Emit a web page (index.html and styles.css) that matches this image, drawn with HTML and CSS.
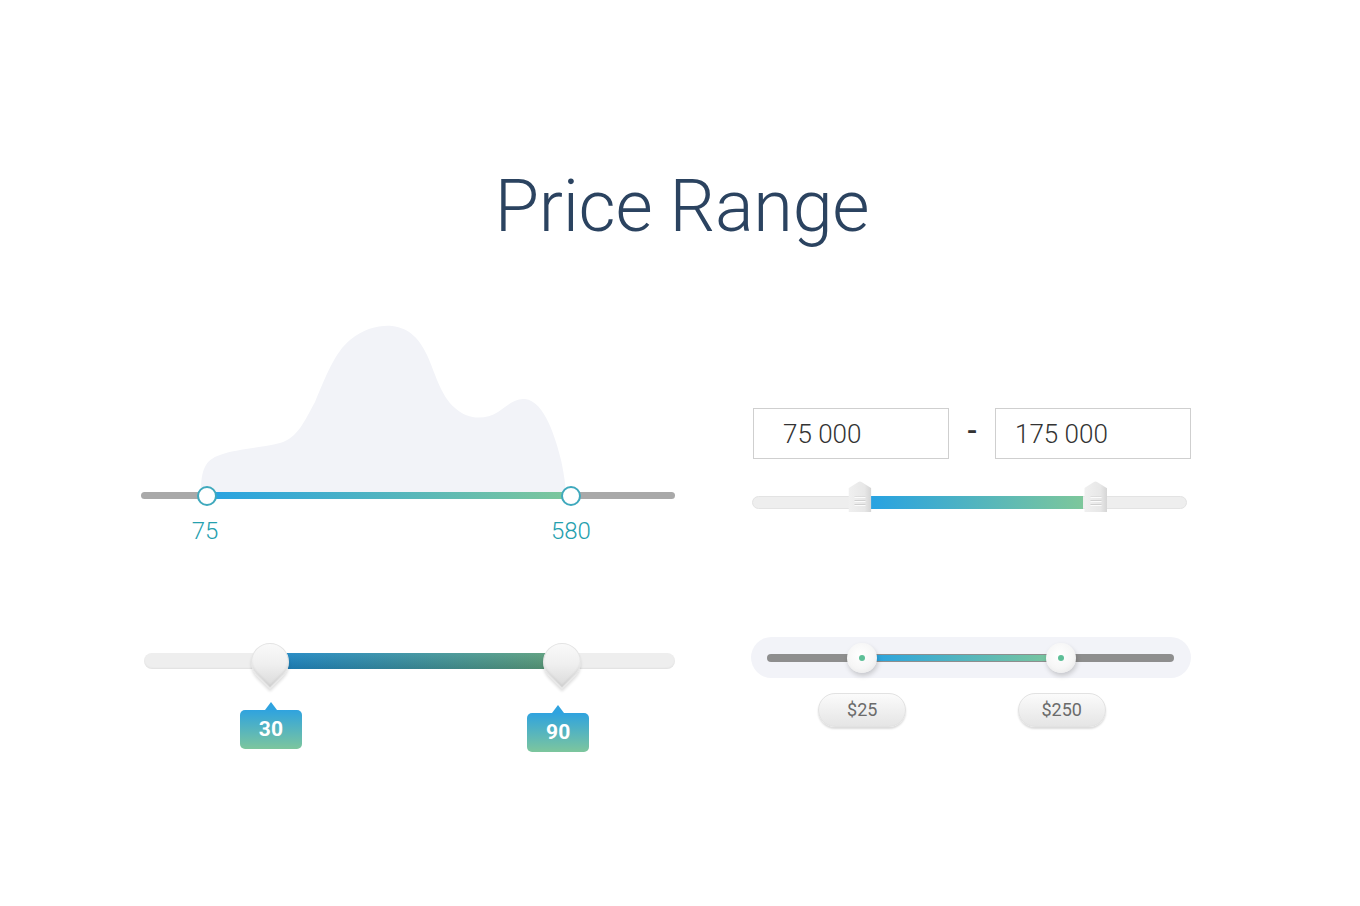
FILE: index.html
```html
<!DOCTYPE html>
<html lang="en">
<head>
    <meta charset="UTF-8">
    <meta name="viewport" content="width=device-width, initial-scale=1.0">
    <title>Price Range</title>
    <link rel="stylesheet" href="styles.css">
</head>
<body>
    <main class="page">
        <h1 class="title">Price Range</h1>

        <div class="grid">
            <!-- slider with distribution hill -->
            <section class="widget">
                <svg class="hill" viewBox="141 320 534 172" width="534" height="172">
                    <path d="M201,492 C201,470 205,460 220,455 C235,449 260,448 280,443 C298,438 305,420 315,402 C325,378 335,352 350,340 C365,328 380,325 392,326 C410,328 420,340 427,355 C435,372 440,395 455,408 C468,420 485,420 498,412 C508,405 515,398 525,399 C545,401 556,440 561,460 C565,478 566,492 566,492 Z" fill="#f2f3f8"/>
                </svg>
                <div class="track-thin">
                    <div class="fill-thin" style="left: 12.36%; width: 68.16%;"></div>
                    <span class="ring-handle" style="left: 12.36%;"></span>
                    <span class="ring-handle" style="left: 80.52%;"></span>
                </div>
                <div class="thin-labels">
                    <span class="thin-label" style="left: 12%;">75</span>
                    <span class="thin-label" style="left: 80.5%;">580</span>
                </div>
            </section>

            <!-- slider with input boxes -->
            <section class="widget widget-inputs">
                <div class="input-row">
                    <input class="price-box" type="text" value="75 000">
                    <span class="dash">-</span>
                    <input class="price-box price-box-max" type="text" value="175 000">
                </div>
                <div class="track-bar">
                    <div class="fill-bar" style="left: 27.1%; width: 49.2%;"></div>
                    <span class="grip-handle" style="left: 24.7%;"><i></i></span>
                    <span class="grip-handle" style="left: 79.1%;"><i></i></span>
                </div>
            </section>

            <!-- slider with pin handles -->
            <section class="widget widget-pins">
                <div class="track-pins">
                    <div class="fill-pins" style="left: 26.5%; width: 49.7%;"></div>
                    <span class="pin" style="left: 23.7%;"></span>
                    <span class="pin" style="left: 78.7%;"></span>
                </div>
                <div class="tips">
                    <span class="tip" style="left: 23.9%;">30</span>
                    <span class="tip tip-low" style="left: 78%;">90</span>
                </div>
            </section>

            <!-- slider in a pill -->
            <section class="widget widget-pill">
                <div class="pill">
                    <div class="track-dark">
                        <div class="fill-dark" style="left: 23.4%; width: 48.8%;"></div>
                        <span class="knob" style="left: 23.4%;"></span>
                        <span class="knob" style="left: 72.2%;"></span>
                    </div>
                </div>
                <div class="pill-labels">
                    <span class="pill-label" style="left: 23.4%;">$25</span>
                    <span class="pill-label" style="left: 72.4%;">$250</span>
                </div>
            </section>
        </div>
    </main>
</body>
</html>
```

FILE: styles.css
```css
* {
    box-sizing: border-box;
    margin: 0;
    padding: 0;
}

body {
    font-family: Roboto, "Liberation Sans", Arial, sans-serif;
    background-color: #ffffff;
    color: #333333;
    min-height: 100vh;
}

.page {
    padding-top: 171px;
}

.title {
    text-align: center;
    font-size: 72px;
    font-weight: 300;
    line-height: 1;
    letter-spacing: -0.3px;
    color: #2b4360;
    padding-left: 4px;
}

.grid {
    display: grid;
    grid-template-columns: 534px 440px;
    grid-template-rows: 240px 150px;
    column-gap: 76px;
    row-gap: 70px;
    margin: 77px 0 0 141px;
}

.widget {
    position: relative;
}

/* top left */
.hill {
    display: block;
}

.track-thin {
    position: relative;
    height: 7px;
    background-color: #a9a9a9;
    border-radius: 4px;
}

.fill-thin {
    position: absolute;
    top: 0;
    bottom: 0;
    background: linear-gradient(to right, #27a2e2, #7dc79b);
}

.ring-handle {
    position: absolute;
    top: 50%;
    width: 20px;
    height: 20px;
    border-radius: 50%;
    background-color: #ffffff;
    border: 2px solid #3fa9bd;
    transform: translate(-50%, -50%);
}

.thin-labels {
    position: relative;
    height: 24px;
    margin-top: 20px;
}

.thin-label {
    position: absolute;
    top: 0;
    transform: translateX(-50%);
    font-size: 24px;
    font-weight: 300;
    line-height: 1;
    color: #25a0ae;
}

/* top right */
.widget-inputs {
    padding-top: 88px;
}

.input-row {
    display: flex;
    align-items: center;
    padding-left: 2px;
}

.price-box {
    width: 196px;
    height: 51px;
    border: 1px solid #cfcfcf;
    padding-left: 29px;
    font-family: inherit;
    font-size: 26px;
    font-weight: 300;
    color: #333333;
    background: #ffffff;
    outline: none;
}

.price-box-max {
    padding-left: 19px;
}

.dash {
    width: 46px;
    text-align: center;
    font-size: 30px;
    font-weight: 500;
    line-height: 1;
    color: #333333;
    margin-top: -5px;
}

.track-bar {
    position: relative;
    width: 435px;
    height: 13px;
    margin: 37px 0 0 1px;
    background-color: #eeeeee;
    border: 1px solid #e3e3e3;
    border-radius: 7px;
}

.fill-bar {
    position: absolute;
    top: -1px;
    bottom: -1px;
    background: linear-gradient(to right, #27a2e2, #7dc79b);
}

.grip-handle {
    position: absolute;
    top: 50%;
    width: 23px;
    height: 31px;
    transform: translate(-50%, calc(-50% - 6px));
    clip-path: polygon(50% 0, 100% 23%, 100% 100%, 0 100%, 0 23%);
    background: linear-gradient(to right, #f0f0f0 0%, #e7e7e7 70%, #d4d4d4 100%);
    display: flex;
    align-items: center;
    justify-content: center;
}

.grip-handle i {
    display: block;
    width: 11px;
    height: 11px;
    margin-top: 11px;
    background: repeating-linear-gradient(to bottom, #d0d0d0 0 1px, #fbfbfb 1px 2px, transparent 2px 4px);
}

/* bottom left */
.track-pins {
    position: relative;
    height: 16px;
    margin: 23px 0 0 3px;
    width: 531px;
    background-color: #eeeeee;
    border-radius: 8px;
    box-shadow: inset 0 -1px 2px rgba(0, 0, 0, 0.06);
}

.fill-pins {
    position: absolute;
    top: 0;
    bottom: 0;
    background:
        linear-gradient(to bottom, rgba(255, 255, 255, 0.05), rgba(0, 0, 0, 0.12)),
        linear-gradient(to right, #2088c4, #5c9f7d);
}

.pin {
    position: absolute;
    top: -10px;
    width: 38px;
    height: 38px;
    margin-left: -19px;
    border-radius: 50% 50% 0 50%;
    transform: rotate(45deg);
    border: 1px solid #e4e4e4;
    background: linear-gradient(135deg, #fdfdfd 0%, #efefef 55%, #d9d9d9 100%);
    box-shadow: 2px 2px 3px rgba(0, 0, 0, 0.13), inset -2px -2px 2px rgba(0, 0, 0, 0.05);
}

.tips {
    position: relative;
    height: 60px;
    margin-left: 3px;
    width: 531px;
}

.tip {
    position: absolute;
    top: 41px;
    width: 62px;
    height: 39px;
    transform: translateX(-50%);
    border-radius: 5px;
    background: linear-gradient(to bottom, #2fa3df, #7dc69d);
    color: #ffffff;
    font-size: 21px;
    font-weight: 700;
    line-height: 39px;
    text-align: center;
}

.tip-low {
    top: 44px;
}

.tip::before {
    content: "";
    position: absolute;
    left: 50%;
    top: -8px;
    margin-left: -6px;
    border-left: 6px solid transparent;
    border-right: 6px solid transparent;
    border-bottom: 8px solid #2fa3df;
}

/* bottom right */
.widget-pill {
    padding-top: 7px;
}

.pill {
    height: 41px;
    padding: 0 17px 0 16px;
    display: flex;
    align-items: center;
    background-color: #f2f3f8;
    border-radius: 21px;
}

.track-dark {
    position: relative;
    flex: 1;
    height: 8px;
    background-color: #8e8e8e;
    border-radius: 4px;
}

.fill-dark {
    position: absolute;
    top: 1px;
    bottom: 1px;
    background: linear-gradient(to right, #27a2e2, #7dc79b);
}

.knob {
    position: absolute;
    top: 50%;
    width: 30px;
    height: 30px;
    border-radius: 50%;
    transform: translate(-50%, -50%);
    background: radial-gradient(circle at 45% 40%, #ffffff 0%, #f6f6f6 55%, #e2e2e2 100%);
    box-shadow: 1px 3px 5px rgba(0, 0, 0, 0.18);
}

.knob::after {
    content: "";
    position: absolute;
    left: 50%;
    top: 50%;
    width: 6px;
    height: 6px;
    margin: -3px 0 0 -3px;
    border-radius: 50%;
    background-color: #5dbf97;
}

.pill-labels {
    position: relative;
    height: 40px;
    margin: 15px 17px 0 16px;
}

.pill-label {
    position: absolute;
    top: 0;
    width: 88px;
    height: 34px;
    transform: translateX(-50%);
    border-radius: 17px;
    border: 1px solid #e2e2e2;
    background: linear-gradient(to bottom, #fbfbfb, #e5e5e5);
    box-shadow: 0 2px 2px rgba(0, 0, 0, 0.14);
    color: #6b6b6b;
    font-size: 18px;
    line-height: 32px;
    text-align: center;
}
```
